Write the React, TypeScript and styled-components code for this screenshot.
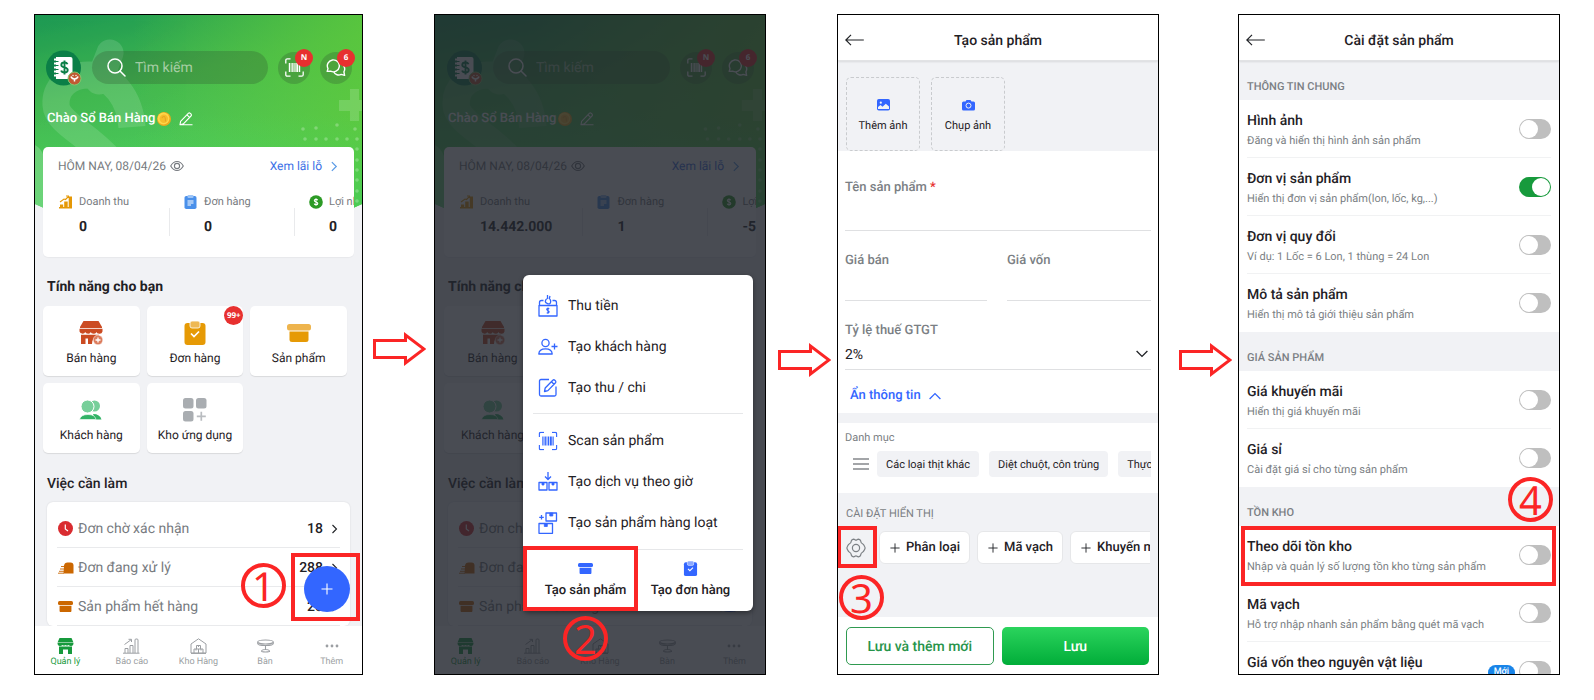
import React from "react";
import styled, { createGlobalStyle } from "styled-components";

const RED = "#fb2525";
const BLUE = "#3366ff";
const GREEN = "#179a3c";

const GlobalStyle = createGlobalStyle`
  * { box-sizing: border-box; }
  body {
    margin: 0;
    background: #fff;
    color: #1f2125;
    font-family: Roboto, "Noto Sans", sans-serif;
    text-rendering: geometricPrecision;
  }
  button { font: inherit; color: inherit; border: 0; padding: 0; background: none; cursor: pointer; text-rendering: inherit; }
  input, select { font: inherit; color: inherit; border: 0; padding: 0; background: none; outline: none; text-rendering: inherit; }
  a { color: inherit; text-decoration: none; }
  h1, h2, h3, p, ul { margin: 0; padding: 0; font-weight: inherit; }
  ul { list-style: none; }
  svg { display: block; flex: none; }
`;

/* ---------- guide layout ---------- */

const Guide = styled.main`
  display: grid;
  grid-template-columns:
    minmax(0, 329fr) 71px minmax(0, 332fr) 71px minmax(0, 322fr) 79px minmax(0, 322fr);
  height: 100vh;
  min-height: 600px;
  padding: 14px 34px 25px;
`;

const Phone = styled.section<{ $white?: boolean }>`
  position: relative;
  display: flex;
  flex-direction: column;
  min-height: 0;
  overflow: hidden;
  border: 1px solid #000;
  background: ${(p) => (p.$white ? "#fff" : "#f1f2f5")};
`;

const ArrowCell = styled.div<{ $top: number; $left: number }>`
  padding: ${(p) => p.$top}px 0 0 ${(p) => p.$left}px;
`;

const StepArrow = ({ top, left }: { top: number; left: number }) => (
  <ArrowCell $top={top} $left={left}>
    <svg width="53" height="34" viewBox="0 0 53 34" fill="none" stroke={RED} strokeWidth="3">
      <path d="M1.5 8.5H32.5V3L51 17L32.5 31V25.5H1.5Z" />
    </svg>
  </ArrowCell>
);

const Highlight = styled.span<{ $inset: string }>`
  position: absolute;
  inset: ${(p) => p.$inset};
  z-index: 3;
  border: 4px solid ${RED};
  pointer-events: none;
`;

const StepNumber = styled.span<{ $top: number; $left?: number; $right?: number }>`
  position: absolute;
  top: ${(p) => p.$top}px;
  ${(p) => (p.$left !== undefined ? `left: ${p.$left}px;` : "")}
  ${(p) => (p.$right !== undefined ? `right: ${p.$right}px;` : "")}
  z-index: 4;
  display: grid;
  place-items: center;
  width: 45px;
  height: 45px;
  border: 4px solid ${RED};
  border-radius: 50%;
  color: ${RED};
  font: 400 40px/36px "Noto Sans", sans-serif;
  pointer-events: none;
`;

/* ---------- icons ---------- */

const ScanIcon = ({ color = "#fff" }: { color?: string }) => (
  <svg width="19" height="19" viewBox="0 0 19 19" fill="none" stroke={color} strokeWidth="1.3">
    <path d="M.8 5.5V2.3Q.8.8 2.3.8H5.5M13.5.8H16.7Q18.2.8 18.2 2.3V5.5M18.2 13.5V16.7Q18.2 18.2 16.7 18.2H13.5M5.5 18.2H2.3Q.8 18.2.8 16.7V13.5" />
    <path d="M4.4 5V14M7.2 5V14M10 5V14M14.6 5V14" strokeWidth="1.2" />
    <path d="M12.3 5V14" strokeWidth="2" />
    <path d="M5.9 5V14M8.6 5V14" strokeWidth=".6" />
  </svg>
);

const SearchIcon = () => (
  <svg width="19" height="19" viewBox="0 0 19 19" fill="none" stroke="#fff" strokeWidth="1.5">
    <circle cx="8" cy="8" r="7" />
    <path d="M13 13L18 18" strokeLinecap="round" />
  </svg>
);

const ChatIcon = () => (
  <svg width="20" height="18" viewBox="0 0 20 18" fill="none" stroke="#fff" strokeWidth="1.4" strokeLinejoin="round">
    <path d="M1.2 12.4L2 9.6A6 6 0 1 1 4.6 12.2Z" />
    <path d="M14.4 4.6A5.6 5.6 0 0 1 17.9 12.9L18.6 16.4L15.2 15.4A5.6 5.6 0 0 1 7.8 13.2" />
  </svg>
);

const AvatarArt = () => (
  <svg width="36" height="36" viewBox="0 0 36 36">
    <circle cx="17.5" cy="18" r="17.5" fill="#0b7f47" />
    <path d="M10 7H24.5Q26.5 7 26.5 9V27Q26.5 29 24.5 29H10Z" fill="#fff" />
    <path d="M8 9.5H12M8 13.5H12M8 17.5H12M8 21.5H12M8 25.5H12" stroke="#fff" strokeWidth="2" />
    <path d="M10 11.5H12.5M10 15.5H12.5M10 19.5H12.5M10 23.5H12.5" stroke="#0b7f47" strokeWidth="1.2" />
    <path
      d="M21.5 14.2C21 12.8 19.6 12.5 18.4 12.5C16.8 12.5 15.3 13.3 15.3 14.9C15.3 18.3 21.7 16.6 21.7 20C21.7 21.7 20.2 22.5 18.5 22.5C17 22.5 15.6 21.9 15.2 20.5M18.5 10.5V24.5"
      fill="none"
      stroke="#0b7f47"
      strokeWidth="1.9"
    />
    <circle cx="28.5" cy="28.5" r="6.5" fill="#c05a33" stroke="#86c66f" />
    <path d="M25 26.5Q25.500 28.500 28.5 29Q31.500 28.500 32 26.500M28.5 28.500V31.5" stroke="#fff" strokeWidth="1.5" fill="none" />
    <circle cx="27" cy="25.5" r=".7" fill="#fff" />
    <circle cx="30" cy="25.5" r=".7" fill="#fff" />
  </svg>
);

const CoinIcon = () => (
  <svg width="14" height="14" viewBox="0 0 14 14">
    <circle cx="7" cy="7" r="7" fill="#eca91c" />
    <circle cx="6.5" cy="6.5" r="5.9" fill="#ffd54a" />
    <circle cx="6.8" cy="6.8" r="4.2" fill="#f7bd2c" />
    <path d="M5 6.2Q5.5 4.5 7 4.5T8.5 9.5" stroke="#e6a524" strokeWidth="1.1" fill="none" />
  </svg>
);

const PenIcon = () => (
  <svg width="14" height="14" viewBox="0 0 14 14" fill="none" stroke="#fff" strokeWidth="1.1" strokeLinejoin="round">
    <path d="M1 12.8L1.6 9.3L9.3 1.3Q10.3.4 11.3 1.3L12 2Q12.9 3 12 4L4.4 11.9L1 12.8H13.5" />
    <path d="M8 2.8L10.6 5.4" />
  </svg>
);

const EyeIcon = () => (
  <svg width="14" height="12" viewBox="0 0 14 12" fill="none" stroke="#777b80" strokeWidth="1.1">
    <path d="M.7 6Q3.2 1.5 7 1.5T13.3 6Q10.8 10.5 7 10.5T.7 6Z" />
    <circle cx="7" cy="6" r="2.6" />
  </svg>
);

const Chevron = ({ dir = "right", color = "currentColor", size = 10 }: { dir?: string; color?: string; size?: number }) => {
  const d: Record<string, string> = {
    right: "M3.5 1L7.5 5L3.5 9",
    down: "M0.5 2.5L5 7L9.5 2.5",
    up: "M0.5 7.5L5 3L9.5 7.5",
  };
  return (
    <svg width={size} height={size} viewBox="0 0 10 10" fill="none" stroke={color} strokeWidth="1.1">
      <path d={d[dir]} />
    </svg>
  );
};

const RevenueIcon = () => (
  <svg width="14" height="14" viewBox="0 0 14 14" fill="#e59806">
    <path d="M1 9.5H4.2V13H1ZM5.2 6.5H8.7V13H5.2ZM9.7 1.5H13V13H9.7ZM0 12H13V13.6H0Z" />
    <path d="M1 7L5 4L6.5 4.5L9 2M7 1H9.5V3" fill="none" stroke="#e59806" strokeWidth="1.1" />
  </svg>
);

const OrdersIcon = () => (
  <svg width="13" height="14" viewBox="0 0 13 14">
    <rect x=".5" y="1" width="12" height="13" rx="1.8" fill="#4a90ea" />
    <rect x="3.5" y="0" width="6" height="3" rx="1" fill="#9cc4f7" />
    <path d="M3.5 6H9.5M3.5 8H9.5M3.5 10H7" stroke="#fff" strokeWidth="1.1" />
  </svg>
);

const ProfitIcon = () => (
  <svg width="14" height="14" viewBox="0 0 14 14">
    <circle cx="7" cy="7" r="6.8" fill="#2c9a25" />
    <path
      d="M8.7 5.3C8.4 4.5 7.7 4.3 7 4.3C6 4.3 5.3 4.8 5.3 5.6C5.3 7.5 8.8 6.5 8.8 8.4C8.8 9.3 8 9.7 7 9.7C6.1 9.7 5.4 9.4 5.2 8.6M7 3.2V10.8"
      fill="none"
      stroke="#fff"
      strokeWidth="1.1"
    />
  </svg>
);

const SellIcon = () => (
  <svg width="24" height="24" viewBox="0 0 24 24">
    <path d="M4.5 0H19.5L23 6V7H1V6Z" fill="#cb4b22" />
    <path d="M.5 7.8H23.5V10.5Q22.8 13 20.4 12.8Q17.5 12.5 17.5 11Q17 13 14.6 12.8Q12 12.6 11.8 11Q11.4 12.9 9.2 12.8Q6.6 12.7 6.2 11Q5.5 12.9 3.6 12.8Q1 12.6.5 10.5Z" fill="#cb4b22" />
    <path d="M2 13.7H20V15.5Q13 16 13 23H9V17.5H6.5V23H2Z" fill="#cb4b22" />
    <circle cx="19" cy="19" r="4.8" fill="#dc7d5e" stroke="#fff" strokeWidth=".5" />
    <path d="M19 16.5V21.5M16.5 19H21.5" stroke="#fff" strokeWidth="1.3" />
  </svg>
);

const ClipIcon = ({ size, body, clip }: { size: number; body: string; clip: string }) => (
  <svg width={size} height={size} viewBox="0 0 24 24">
    <rect x="1.5" y="2" width="21" height="22" rx="3" fill={body} />
    <rect x="7" y="0" width="10" height="7" rx="2" fill={clip} stroke="#fff" strokeWidth=".8" />
    <path d="M8 12.5L11 15.5L16 10.5" fill="none" stroke="#fff" strokeWidth="1.7" />
  </svg>
);

const BoxIcon = ({ width, lid, body }: { width: number; lid: string; body: string }) => (
  <svg width={width} height={(width * 3) / 4} viewBox="0 0 24 18">
    <rect x="0" y="0" width="24" height="6.5" rx="2.5" fill={lid} />
    <path d="M2.5 7.5H21.5V15.5Q21.5 18 19 18H5Q2.5 18 2.5 15.5Z" fill={body} />
  </svg>
);

const CustomersIcon = () => (
  <svg width="24" height="24" viewBox="0 0 24 24">
    <circle cx="15.5" cy="8" r="5.5" fill="#77cf9a" />
    <path d="M14 16Q21 16 22.5 21.5H16Z" fill="#32b366" />
    <circle cx="8.5" cy="8.5" r="6.5" fill="#77cf9a" stroke="#fff" />
    <path d="M.5 21.5Q2 16.5 9 16.5T17 21.5Z" fill="#32b366" stroke="#fff" strokeWidth=".6" />
  </svg>
);

const AppsIcon = () => (
  <svg width="24" height="24" viewBox="0 0 24 24" fill="#a9adb1">
    <rect x="0" y="0" width="10.5" height="10.5" rx="2.5" />
    <rect x="13" y="0" width="10.5" height="10.5" rx="2.5" />
    <rect x="0" y="13" width="10.5" height="10.5" rx="2.5" />
    <path d="M18.3 13.8V22.8M13.8 18.3H22.8" stroke="#b9bcc0" strokeWidth="1.7" />
  </svg>
);

const ClockIcon = () => (
  <svg width="15" height="15" viewBox="0 0 15 15">
    <circle cx="7.5" cy="7.5" r="7.5" fill="#d92c30" />
    <path d="M7.3 3.5V8L10 10" fill="none" stroke="#fff" strokeWidth="1.2" />
  </svg>
);

const DispatchIcon = () => (
  <svg width="16" height="12" viewBox="0 0 16 12">
    <path d="M6 3.5Q6.5.5 9.5.5H12.5Q15.5.5 15.5 3.5V11.500H5.500Z" fill="#cb6700" />
    <path d="M3 4.5H7M2 7H6M1 9.3H6M0 11.2H6" stroke="#cb6700" strokeWidth=".9" />
  </svg>
);

const StoreNavIcon = () => (
  <svg width="17" height="16" viewBox="0 0 17 16" fill={GREEN}>
    <path d="M2.5 0H14.5L16.5 4.5H.5Z" />
    <path d="M.5 5H16.5Q16.5 8 14 8Q12.5 8 11.5 7Q10 8.2 8.5 7Q7 8.2 5.5 7Q4.5 8 3 8Q.5 8 .5 5Z" />
    <path d="M2 8.6H15V16H11V11.5H6V16H2Z" />
  </svg>
);

const ReportNavIcon = () => (
  <svg width="17" height="16" viewBox="0 0 17 16" fill="none" stroke="#9c9fa3" strokeWidth="1">
    <path d="M2 15V10.5H5V15M7 15V7.5H10V15M12 15V2Q12 1 13 1H14Q15 1 15 2V15M0 15.2H16.5M1.5 6.5L8 1.8M5.5 1.3H8.5V4" />
  </svg>
);

const WarehouseNavIcon = () => (
  <svg width="17" height="16" viewBox="0 0 17 16" fill="none" stroke="#9c9fa3" strokeWidth="1">
    <path d="M1 15V6L8.5.8L16 6V15ZM1 15.4H16M4 15V11H13V15M8.5 11V15M6.5 11V7.5H10.5V11M6 11V12.5M11 11V12.5M8.5 7.5V9" />
  </svg>
);

const TableNavIcon = () => (
  <svg width="17" height="14" viewBox="0 0 17 14" fill="none" stroke="#9c9fa3" strokeWidth="1.1">
    <path d="M.7 3Q.7 1 8.5 1T16.3 3V4.5Q16.3 6.5 8.5 6.5T.7 4.5ZM.7 3.5Q3 5 8.5 5T16.3 3.5M8.5 6.5V10.5M4.5 12.5Q4.5 10.5 8.5 10.5T12.5 12.5Q8.5 13.5 4.5 12.5" />
  </svg>
);

const MoreNavIcon = () => (
  <svg width="14" height="16" viewBox="0 0 14 16" fill="#9c9fa3">
    <circle cx="2" cy="8" r="1.4" />
    <circle cx="7" cy="8" r="1.4" />
    <circle cx="12" cy="8" r="1.4" />
  </svg>
);

const BlueLine = ({ children }: { children: React.ReactNode }) => (
  <svg width="20" height="22" viewBox="0 0 20 22" fill="none" stroke={BLUE} strokeWidth="1.3" strokeLinejoin="round">
    {children}
  </svg>
);

const CollectIcon = () => (
  <BlueLine>
    <path d="M1 10.5H19V21H1ZM1.5 10.5V7.5Q1.5 5.5 3.5 5.5H5.5M14.5 5.5H16.5Q18.5 5.5 18.5 7.5V10.5" />
    <path d="M10 3Q7.3 4.5 7.3 6.3T10 8.8T12.7 6.3Q12.7 5 11.6 4M9.5 0L9.5 3.5M12 1L11.2 4" />
    <path d="M11.3 13.7Q10 13 9 13.7T10 15.7Q11.5 16.2 11 17.3T8.7 17.7M10 12.5V18.7" strokeWidth="1.1" />
  </BlueLine>
);

const AddPersonIcon = () => (
  <BlueLine>
    <circle cx="7.5" cy="7" r="3.6" />
    <path d="M.8 18Q1 12.8 7.5 12.8T14.2 18ZM13.5 10.5H19.5M16.5 7.5V13.5" />
  </BlueLine>
);

const ComposeIcon = () => (
  <BlueLine>
    <path d="M11 2.5H3Q1.5 2.5 1.5 4V17.5Q1.5 19 3 19H16.5Q18 19 18 17.5V9.5" />
    <path d="M6.5 14.5L7.2 11L14.8 3.2Q15.8 2.3 16.8 3.2L17.5 3.9Q18.3 4.9 17.5 5.8L9.9 13.6ZM13.5 4.8L16 7.3" />
  </BlueLine>
);

const HourlyIcon = () => (
  <BlueLine>
    <path d="M10 1V8M7 5.5L10 8.5L13 5.5M1 11.5H9V19H1ZM11 11.5H19V19H11Z" />
    <path d="M4 11.5H6V14H4ZM14 11.5H16V14H14Z" fill={BLUE} strokeWidth=".8" />
  </BlueLine>
);

const BulkIcon = () => (
  <BlueLine>
    <path d="M8 1H18.5V9H8ZM1 11.5H14.5V21.3H1ZM3.5 3V7.5M1.2 5.3H5.8" />
    <path d="M11.8 1H14.8V4H11.8ZM6.3 11.5H9.3V14.5H6.3Z" fill={BLUE} strokeWidth=".8" />
  </BlueLine>
);

const BackIcon = () => (
  <svg width="19" height="12" viewBox="0 0 19 12" fill="none" stroke="#1f2125" strokeWidth="1.2">
    <path d="M.8 6H18.8M6 .8L.8 6L6 11.2" />
  </svg>
);

const ImageIcon = () => (
  <svg width="13" height="12" viewBox="0 0 13 12">
    <rect width="13" height="11.5" rx="1.8" fill={BLUE} />
    <circle cx="3.8" cy="3.7" r="1.1" fill="#f1f2f5" />
    <path d="M1 10V8L3.5 6L5.5 7.7L8.8 4.8L12 7.5V10Z" fill="#f1f2f5" />
  </svg>
);

const CameraIcon = () => (
  <svg width="13" height="12" viewBox="0 0 13 12">
    <path d="M1.5 2.5H3.5L4.5 1H8.5L9.5 2.5H11.5Q13 2.5 13 4V10Q13 11.5 11.5 11.5H1.5Q0 11.5 0 10V4Q0 2.5 1.5 2.5Z" fill={BLUE} />
    <circle cx="6.5" cy="6.6" r="2.5" fill="none" stroke="#f1f2f5" />
  </svg>
);

const MenuIcon = () => (
  <svg width="16" height="12" viewBox="0 0 16 12" stroke="#85888c" strokeWidth="1.4">
    <path d="M0 1H16M0 6H16M0 11H16" />
  </svg>
);

const GearIcon = () => (
  <svg width="20" height="20" viewBox="0 0 20 20" fill="none" stroke="#7c8085" strokeWidth="1.2" strokeLinejoin="round">
    <circle cx="10" cy="10" r="3.6" />
    <path d="M7.5 1.2Q8.4 1.2 9 1.7Q10 2.5 11 1.7Q11.6 1.2 12.5 1.2Q14.3 1.5 14.7 3Q14.9 5.2 16.5 5.8Q17.6 6.3 18.6 8.5Q19.5 10 18.6 11.5Q17.6 13.7 16.5 14.2Q14.9 14.8 14.7 17Q14.3 18.5 12.5 18.8Q11.6 18.8 11 18.3Q10 17.5 9 18.3Q8.4 18.8 7.5 18.8Q5.7 18.5 5.3 17Q5.1 14.8 3.5 14.2Q2.4 13.7 1.4 11.5Q.5 10 1.4 8.5Q2.4 6.3 3.5 5.8Q5.1 5.2 5.3 3Q5.7 1.5 7.5 1.2Z" />
  </svg>
);

const PlusIcon = ({ size, color }: { size: number; color: string }) => (
  <svg width={size} height={size} viewBox="0 0 12 12" stroke={color} strokeWidth="1.1">
    <path d="M6 .5V11.5M.5 6H11.5" />
  </svg>
);

/* ---------- home screen ---------- */

const HeaderArt = styled.svg`
  position: absolute;
  top: 0;
  left: 0;
  width: 100%;
  height: 196px;
`;

const HomeBody = styled.div<{ $inset: number }>`
  position: relative;
  flex: 1;
  min-height: 0;
  overflow: hidden;
  padding: 34px ${(p) => p.$inset}px 0;
`;

const TopRow = styled.div`
  display: flex;
  align-items: center;
  gap: 10px;
  height: 37px;
  padding: 0 10px 0 11px;
`;

const SearchBox = styled.label`
  flex: 1;
  min-width: 0;
  display: flex;
  align-items: center;
  gap: 9px;
  height: 33px;
  padding: 0 15px;
  border-radius: 17px;
  background: rgba(50, 90, 50, 0.3);
  input {
    flex: 1;
    min-width: 0;
    padding-top: 1px;
    font-size: 14px;
    line-height: 20px;
  }
  input::placeholder { color: rgba(225, 235, 220, 0.65); opacity: 1; }
`;

const RoundButton = styled.button`
  position: relative;
  display: grid;
  place-items: center;
  flex: none;
  width: 32px;
  height: 32px;
  border-radius: 50%;
  background: rgba(50, 90, 50, 0.3);
`;

const Badge = styled.span<{ $size: number; $offset: number }>`
  position: absolute;
  top: ${(p) => p.$offset}px;
  right: ${(p) => p.$offset}px;
  width: ${(p) => p.$size}px;
  height: ${(p) => p.$size}px;
  border-radius: 50%;
  background: #e7302f;
  color: #fff;
  text-align: center;
  font: 700 8px/${(p) => p.$size}px "Open Sans", sans-serif;
`;

const Greeting = styled.p`
  display: flex;
  align-items: center;
  gap: 2px;
  height: 16px;
  margin-top: 25px;
  padding-left: 12px;
  color: #fff;
  font-size: 13px;
  font-weight: 500;
  line-height: 16px;
  button { margin-left: 6px; }
`;

const SummaryCard = styled.section`
  margin: 20px 8px 0;
  padding: 11px 0 21px 15px;
  border-radius: 5px;
  background: #fff;
  overflow: hidden;
  box-shadow: 0 1px 1px rgba(0, 0, 0, 0.04);
`;

const SummaryTop = styled.div`
  display: flex;
  align-items: center;
  gap: 4px;
  height: 16px;
  padding-right: 15px;
  color: #777b80;
  font-size: 12px;
  line-height: 16px;
  a {
    display: flex;
    align-items: center;
    gap: 6px;
    margin-left: auto;
    color: #3b6fe6;
  }
`;

const Metrics = styled.div`
  display: flex;
  margin-top: 20px;
  padding-left: 1px;
`;

const Metric = styled.div`
  flex: none;
  display: grid;
  grid-template-columns: 14px auto;
  column-gap: 6px;
  row-gap: 8px;
  align-items: center;
  min-width: 110px;
  padding-right: 30px;
  span { font-size: 11px; line-height: 16px; color: #777b80; white-space: nowrap; }
  strong { grid-column: 2; font-size: 14px; line-height: 18px; font-weight: 700; }
`;

const MetricRule = styled.i`
  flex: none;
  align-self: flex-end;
  width: 1px;
  height: 28px;
  margin-right: 14px;
  background: #e9eaec;
`;

const Heading = styled.h2<{ $gap: number; $weight: number }>`
  margin: ${(p) => p.$gap}px 0 0 12px;
  font-size: 14px;
  line-height: 20px;
  font-weight: ${(p) => p.$weight};
`;

const Tiles = styled.div`
  display: grid;
  grid-template-columns: repeat(3, 1fr);
  gap: 7px;
  margin: 9px 15px 0 8px;
`;

const Tile = styled.button`
  position: relative;
  display: flex;
  flex-direction: column;
  align-items: center;
  gap: 5px;
  height: 70px;
  padding-top: 15px;
  border-radius: 5px;
  background: #fff;
  box-shadow: 0 1px 1px rgba(0, 0, 0, 0.1);
  font-size: 12px;
  line-height: 16px;
`;

const TileArt = styled.span`
  display: grid;
  place-items: center;
  height: 24px;
`;

const TaskCard = styled.ul`
  margin: 8px 12px 0;
  padding: 7px 10px 0;
  border-radius: 6px;
  background: #fff;
  box-shadow: 0 0 2px rgba(0, 0, 0, 0.12);
`;

const Task = styled.li`
  border-bottom: 1px solid #e9eaec;
  a {
    display: flex;
    align-items: center;
    height: 38px;
    padding: 1px 1px 0;
    font-size: 14px;
    line-height: 20px;
  }
  strong { margin: 0 6px 0 auto; font-weight: 500; }
`;

const TaskArt = styled.span`
  display: grid;
  place-items: center;
  width: 15px;
  margin-right: 5px;
`;

const TaskName = styled.span`
  color: #777b80;
`;

const BottomNav = styled.nav`
  position: relative;
  display: flex;
  height: 48px;
  margin: 0 -3px;
  background: #fff;
`;

const NavItem = styled.a<{ $on?: boolean }>`
  flex: 1;
  display: flex;
  flex-direction: column;
  align-items: center;
  padding-top: 11px;
  font-size: 9px;
  line-height: 12px;
  color: ${(p) => (p.$on ? GREEN : "#9c9fa3")};
`;

const NavArt = styled.span`
  display: grid;
  place-items: center;
  height: 18px;
  margin-bottom: 1px;
`;

const FabSpot = styled.div`
  position: absolute;
  right: 12px;
  bottom: 62px;
`;

const Fab = styled.button`
  display: grid;
  place-items: center;
  width: 46px;
  height: 46px;
  border-radius: 50%;
  background: ${BLUE};
`;

const dots = [
  [268, 114], [281, 113], [302, 110], [320, 114],
  [270, 124], [281, 124], [291, 124], [302, 124], [312, 124], [322, 124],
  [322, 134], [322, 145], [322, 155], [322, 165], [322, 176], [322, 186],
];

const HomeScreen = ({
  id,
  inset,
  revenue,
  orders,
  profit,
  children,
}: {
  id: string;
  inset: number;
  revenue: string;
  orders: string;
  profit: string;
  children?: React.ReactNode;
}) => (
  <>
    <HeaderArt viewBox="0 0 327 196" preserveAspectRatio="none">
      <defs>
        <linearGradient id={id} x1="0" y1="0" x2=".35" y2="1">
          <stop offset="0" stopColor="#1c9853" />
          <stop offset=".4" stopColor="#41b750" />
          <stop offset="1" stopColor="#52cf62" />
        </linearGradient>
        <linearGradient id={`${id}s`} x1="0" y1="0" x2="1" y2="0">
          <stop offset=".3" stopColor="#62cb38" stopOpacity="0" />
          <stop offset="1" stopColor="#5fc93a" stopOpacity=".8" />
        </linearGradient>
        <linearGradient id={`${id}b`} x1="0" y1="0" x2="0" y2="1">
          <stop offset=".5" stopColor="#4dd156" stopOpacity="0" />
          <stop offset="1" stopColor="#46cb58" stopOpacity=".9" />
        </linearGradient>
        <clipPath id={`${id}c`}>
          <path d="M0 0H327V189L318 193Q164 215 9 193L0 189Z" />
        </clipPath>
      </defs>
      <g clipPath={`url(#${id}c)`}>
        <rect width="327" height="200" fill={`url(#${id})`} />
        <rect width="327" height="200" fill={`url(#${id}s)`} />
        <rect width="327" height="200" fill={`url(#${id}b)`} />
        <g fill="none" stroke="#fff" strokeWidth="27" opacity=".13">
          <path d="M97 112C95 84 78 60 54 60C32 60 20 74 21 90C22 108 52 118 76 146" />
          <path d="M75 38L64 66" strokeLinecap="round" />
        </g>
        <path d="M0 130Q8 134 12 150V196H0Z" fill="#fff" fillOpacity=".2" />
        <path d="M315 74H324V85H334V96H324V106H315V96H304V85H315Z" fill="#fff" fillOpacity=".16" />
        {dots.map(([x, y]) => (
          <circle key={`${x}-${y}`} cx={x} cy={y} r="1.8" fill="#fff" fillOpacity=".25" />
        ))}
      </g>
    </HeaderArt>
    <HomeBody $inset={inset}>
      <TopRow>
        <AvatarArt />
        <SearchBox>
          <SearchIcon />
          <input type="search" placeholder="Tìm kiếm" aria-label="Tìm kiếm" />
        </SearchBox>
        <RoundButton aria-label="Scan">
          <ScanIcon />
          <Badge $size={18} $offset={-3}>N</Badge>
        </RoundButton>
        <RoundButton aria-label="Chat">
          <ChatIcon />
          <Badge $size={18} $offset={-3}>6</Badge>
        </RoundButton>
      </TopRow>
      <Greeting>
        Chào Sổ Bán Hàng <CoinIcon />
        <button aria-label="Sửa"><PenIcon /></button>
      </Greeting>
      <SummaryCard>
        <SummaryTop>
          HÔM NAY, 08/04/26 <EyeIcon />
          <a href="#report">Xem lãi lỗ <Chevron color="#5b9be6" size={11} /></a>
        </SummaryTop>
        <Metrics>
          <Metric><RevenueIcon /><span>Doanh thu</span><strong>{revenue}</strong></Metric>
          <MetricRule />
          <Metric><OrdersIcon /><span>Đơn hàng</span><strong>{orders}</strong></Metric>
          <MetricRule />
          <Metric><ProfitIcon /><span>Lợi nhuận</span><strong>{profit}</strong></Metric>
        </Metrics>
      </SummaryCard>
      <Heading $gap={20} $weight={700}>Tính năng cho bạn</Heading>
      <Tiles>
        <Tile><TileArt><SellIcon /></TileArt>Bán hàng</Tile>
        <Tile>
          <TileArt><ClipIcon size={24} body="#e69a05" clip="#eeb854" /></TileArt>Đơn hàng
          <Badge $size={19} $offset={0}>99+</Badge>
        </Tile>
        <Tile><TileArt><BoxIcon width={24} lid="#eeb44d" body="#e69a05" /></TileArt>Sản phẩm</Tile>
        <Tile><TileArt><CustomersIcon /></TileArt>Khách hàng</Tile>
        <Tile><TileArt><AppsIcon /></TileArt>Kho ứng dụng</Tile>
      </Tiles>
      <Heading $gap={21} $weight={500}>Việc cần làm</Heading>
      <TaskCard>
        <Task><a href="#pending"><TaskArt><ClockIcon /></TaskArt><TaskName>Đơn chờ xác nhận</TaskName><strong>18</strong><Chevron /></a></Task>
        <Task><a href="#active"><TaskArt><DispatchIcon /></TaskArt><TaskName>Đơn đang xử lý</TaskName><strong>288</strong><Chevron /></a></Task>
        <Task><a href="#stock"><TaskArt><BoxIcon width={15} lid="#cb6700" body="#cb6700" /></TaskArt><TaskName>Sản phẩm hết hàng</TaskName><strong>28</strong><Chevron /></a></Task>
      </TaskCard>
    </HomeBody>
    <BottomNav>
      <NavItem href="#home" $on><NavArt><StoreNavIcon /></NavArt>Quản lý</NavItem>
      <NavItem href="#reports"><NavArt><ReportNavIcon /></NavArt>Báo cáo</NavItem>
      <NavItem href="#warehouse"><NavArt><WarehouseNavIcon /></NavArt>Kho Hàng</NavItem>
      <NavItem href="#tables"><NavArt><TableNavIcon /></NavArt>Bàn</NavItem>
      <NavItem href="#more"><NavArt><MoreNavIcon /></NavArt>Thêm</NavItem>
    </BottomNav>
    <FabSpot>
      <Fab aria-label="Tạo mới"><PlusIcon size={12} color="#fff" /></Fab>
      {children}
    </FabSpot>
  </>
);

/* ---------- quick menu ---------- */

const Scrim = styled.div`
  position: absolute;
  inset: 0;
  background: rgba(33, 37, 45, 0.82);
`;

const QuickMenu = styled.div`
  position: absolute;
  right: 12px;
  bottom: 63px;
  width: 230px;
  padding: 10px 10px 0;
  border-radius: 6px;
  background: #fff;
  box-shadow: 0 2px 5px rgba(0, 0, 0, 0.4);
`;

const QuickItem = styled.button`
  display: flex;
  align-items: center;
  gap: 10px;
  width: 100%;
  height: 41px;
  padding-left: 5px;
  font-size: 14px;
  line-height: 20px;
`;

const QuickRule = styled.hr`
  height: 1px;
  margin: 5px 0 6px;
  border: 0;
  background: #e6e7e9;
`;

const QuickFooter = styled.div`
  display: grid;
  grid-template-columns: 1fr 1fr;
  margin-top: 6px;
  border-top: 1px solid #e6e7e9;
`;

const QuickAction = styled.button`
  position: relative;
  display: flex;
  flex-direction: column;
  align-items: center;
  gap: 7px;
  height: 61px;
  padding-top: 11px;
  font-size: 13px;
  line-height: 16px;
  font-weight: 500;
`;

const ActionArt = styled.span`
  display: grid;
  place-items: center;
  height: 15px;
`;

/* ---------- shared title bar ---------- */

const TitleBar = styled.header`
  position: relative;
  z-index: 1;
  display: grid;
  grid-template-columns: 30px 1fr 30px;
  align-items: center;
  flex: none;
  height: 46px;
  padding: 4px 7px 0;
  border-bottom: 1px solid #e2e3e5;
  background: #fff;
  box-shadow: 0 1px 2px rgba(0, 0, 0, 0.1);
  h1 { padding-top: 2px; font-size: 14px; line-height: 20px; font-weight: 500; text-align: center; }
`;

/* ---------- product form ---------- */

const PhotoRow = styled.div`
  display: flex;
  gap: 11px;
  padding: 16px 8px 0;
  background: #f1f2f5;
`;

const PhotoButton = styled.button`
  display: flex;
  flex-direction: column;
  align-items: center;
  justify-content: center;
  gap: 8px;
  width: 74px;
  height: 74px;
  padding-top: 3px;
  border: 1px dashed #c9cbce;
  border-radius: 5px;
  font-size: 11px;
  line-height: 14px;
`;

const Fields = styled.div`
  display: grid;
  grid-template-columns: 142px 1fr;
  column-gap: 20px;
  padding: 0 7px;
`;

const Field = styled.label<{ $wide?: boolean; $top: number; $box: number }>`
  position: relative;
  grid-column: ${(p) => (p.$wide ? "1 / -1" : "auto")};
  display: block;
  padding-top: ${(p) => p.$top}px;
  border-bottom: 1px solid #dfe0e2;
  color: #7b7f84;
  font-size: 13px;
  line-height: 16px;
  font-weight: 500;
  em { color: #e7302f; font-style: normal; }
  input, select {
    display: block;
    width: 100%;
    height: ${(p) => p.$box}px;
    padding-top: 1px;
    appearance: none;
    color: #1f2125;
    font-size: 14px;
    font-weight: 400;
  }
`;

const SelectArrow = styled.span`
  position: absolute;
  right: 3px;
  bottom: 9px;
  pointer-events: none;
`;

const ToggleInfo = styled.button`
  display: flex;
  align-items: center;
  align-self: flex-start;
  gap: 8px;
  height: 43px;
  margin-left: 12px;
  padding-top: 9px;
  color: ${BLUE};
  font-size: 13px;
  line-height: 16px;
  font-weight: 500;
`;

const CategoryBox = styled.div`
  padding: 7px 7px 0 7px;
  height: 80px;
  border-top: 10px solid #f1f2f5;
  p { font-size: 11px; line-height: 16px; color: #7b7f84; }
`;

const CategoryRow = styled.div`
  display: flex;
  align-items: center;
  gap: 8px;
  margin-top: 5px;
  padding-left: 8px;
  overflow: hidden;
`;

const Chip = styled.button`
  flex: none;
  height: 26px;
  margin-right: 2px;
  padding: 1px 9px 0;
  border-radius: 4px;
  background: #f1f2f5;
  font-size: 11px;
  line-height: 16px;
`;

const DisplayBox = styled.div`
  flex: 1;
  min-height: 0;
  padding: 13px 8px 0;
  background: #f1f2f5;
  p { font-size: 11px; line-height: 16px; color: #7b7f84; }
`;

const DisplayRow = styled.div`
  display: flex;
  align-items: center;
  margin-top: 9px;
`;

const GearButton = styled.button`
  position: relative;
  display: grid;
  place-items: center;
  flex: none;
  width: 20px;
  height: 33px;
  margin-right: 13px;
`;

const OptionRow = styled.div`
  flex: 1;
  min-width: 0;
  display: flex;
  gap: 7px;
  overflow: hidden;
`;

const Option = styled.button`
  flex: none;
  display: flex;
  align-items: center;
  gap: 6px;
  height: 33px;
  padding: 1px 9px 0 10px;
  border: 1px solid #e6e7e9;
  border-radius: 6px;
  background: #fff;
  font-size: 13px;
  line-height: 16px;
  font-weight: 500;
`;

const SaveBar = styled.footer`
  display: grid;
  grid-template-columns: 1fr 1fr;
  gap: 8px;
  padding: 10px 9px 9px 8px;
  background: #fff;
`;

const SaveButton = styled.button<{ $solid?: boolean }>`
  height: 38px;
  padding-top: 1px;
  border: ${(p) => (p.$solid ? "0" : "1px solid #2f9a50")};
  border-radius: 5px;
  background: ${(p) => (p.$solid ? "linear-gradient(#2bd45d, #01ad39)" : "#fff")};
  color: ${(p) => (p.$solid ? "#fff" : "#27944a")};
  font-size: 14px;
  line-height: 20px;
  font-weight: 500;
`;

/* ---------- settings list ---------- */

const GroupTitle = styled.h2`
  position: relative;
  flex: none;
  height: 39px;
  padding: 18px 8px 0;
  background: #f1f2f5;
  color: #7b7f84;
  font-size: 11px;
  line-height: 16px;
  font-weight: 500;
`;

const SettingRow = styled.label`
  position: relative;
  flex: none;
  display: flex;
  align-items: center;
  height: 58px;
  margin: 0 8px;
  border-bottom: 1px solid #f1f2f3;
  &:has(+ h2) { border-bottom-color: transparent; }
`;

const SettingText = styled.span`
  flex: 1;
  display: flex;
  flex-direction: column;
  gap: 4px;
  padding-top: 2px;
  b { font-size: 14px; line-height: 18px; font-weight: 500; }
  small { font-size: 11px; line-height: 14px; color: #7b7f84; }
`;

const NewTag = styled.span`
  margin: 4px 4px 0 0;
  padding: 0 6px;
  border-radius: 8px;
  background: #1884e8;
  color: #fff;
  font-size: 9px;
  line-height: 15px;
  font-weight: 500;
`;

const Switch = styled.input`
  appearance: none;
  flex: none;
  width: 32px;
  height: 20px;
  margin: 0;
  padding: 1px;
  border-radius: 10px;
  background: #bfbfbf;
  &::before {
    content: "";
    display: block;
    width: 18px;
    height: 18px;
    border-radius: 50%;
    background: #fff;
  }
  &:checked { background: ${GREEN}; }
  &:checked::before { margin-left: auto; }
`;

const Setting = ({
  name,
  note,
  on,
  tag,
  children,
}: {
  name: string;
  note: string;
  on?: boolean;
  tag?: string;
  children?: React.ReactNode;
}) => (
  <SettingRow>
    <SettingText><b>{name}</b><small>{note}</small></SettingText>
    {tag && <NewTag>{tag}</NewTag>}
    <Switch type="checkbox" defaultChecked={on} />
    {children}
  </SettingRow>
);

export default function App() {
  return (
    <>
      <GlobalStyle />
      <Guide>
        <Phone>
          <HomeScreen id="home" inset={0} revenue="0" orders="0" profit="0">
            <Highlight $inset="-13px -10px -9px -13px" />
            <StepNumber $top={-3} $left={-63}>1</StepNumber>
          </HomeScreen>
        </Phone>

        <StepArrow top={318} left={10} />

        <Phone>
          <HomeScreen id="menu" inset={1} revenue="14.442.000" orders="1" profit="-5.120.000" />
          <Scrim />
          <QuickMenu>
            <QuickItem><CollectIcon />Thu tiền</QuickItem>
            <QuickItem><AddPersonIcon />Tạo khách hàng</QuickItem>
            <QuickItem><ComposeIcon />Tạo thu / chi</QuickItem>
            <QuickRule />
            <QuickItem><BlueLine><g transform="translate(.5 1.5)"><ScanIcon color={BLUE} /></g></BlueLine>Scan sản phẩm</QuickItem>
            <QuickItem><HourlyIcon />Tạo dịch vụ theo giờ</QuickItem>
            <QuickItem><BulkIcon />Tạo sản phẩm hàng loạt</QuickItem>
            <QuickFooter>
              <QuickAction>
                <ActionArt><BoxIcon width={15} lid={BLUE} body={BLUE} /></ActionArt>
                Tạo sản phẩm
                <Highlight $inset="-4px 0 0 -10px" />
                <StepNumber $top={66} $left={30}>2</StepNumber>
              </QuickAction>
              <QuickAction>
                <ActionArt><ClipIcon size={15} body={BLUE} clip="#8aa8ff" /></ActionArt>
                Tạo đơn hàng
              </QuickAction>
            </QuickFooter>
          </QuickMenu>
        </Phone>

        <StepArrow top={329} left={12} />

        <Phone $white>
          <TitleBar>
            <button aria-label="Quay lại"><BackIcon /></button>
            <h1>Tạo sản phẩm</h1>
          </TitleBar>
          <PhotoRow>
            <PhotoButton><ImageIcon />Thêm ảnh</PhotoButton>
            <PhotoButton><CameraIcon />Chụp ảnh</PhotoButton>
          </PhotoRow>
          <Fields>
            <Field $wide $top={29} $box={34}>
              Tên sản phẩm <em>*</em>
              <input type="text" />
            </Field>
            <Field $top={22} $box={31}>
              Giá bán
              <input type="text" />
            </Field>
            <Field $top={22} $box={31}>
              Giá vốn
              <input type="text" />
            </Field>
            <Field $wide $top={22} $box={30}>
              Tỷ lệ thuế GTGT
              <select defaultValue="2%">
                <option>2%</option>
              </select>
              <SelectArrow><Chevron dir="down" color="#1f2125" size={12} /></SelectArrow>
            </Field>
          </Fields>
          <ToggleInfo>Ẩn thông tin <Chevron dir="up" size={12} /></ToggleInfo>
          <CategoryBox>
            <p>Danh mục</p>
            <CategoryRow>
              <MenuIcon />
              <Chip>Các loại thịt khác</Chip>
              <Chip>Diệt chuột, côn trùng</Chip>
              <Chip>Thực phẩm</Chip>
            </CategoryRow>
          </CategoryBox>
          <DisplayBox>
            <p>CÀI ĐẶT HIỂN THỊ</p>
            <DisplayRow>
              <GearButton aria-label="Cài đặt">
                <GearIcon />
                <Highlight $inset="-5px -11px -4px -9px" />
                <StepNumber $top={44} $left={-7}>3</StepNumber>
              </GearButton>
              <OptionRow>
                <Option><PlusIcon size={10} color="#1f2125" />Phân loại</Option>
                <Option><PlusIcon size={10} color="#1f2125" />Mã vạch</Option>
                <Option><PlusIcon size={10} color="#1f2125" />Khuyến mãi</Option>
              </OptionRow>
            </DisplayRow>
          </DisplayBox>
          <SaveBar>
            <SaveButton>Lưu và thêm mới</SaveButton>
            <SaveButton $solid>Lưu</SaveButton>
          </SaveBar>
        </Phone>

        <StepArrow top={329} left={20} />

        <Phone $white>
          <TitleBar>
            <button aria-label="Quay lại"><BackIcon /></button>
            <h1>Cài đặt sản phẩm</h1>
          </TitleBar>
          <GroupTitle>THÔNG TIN CHUNG</GroupTitle>
          <Setting name="Hình ảnh" note="Đăng và hiển thị hình ảnh sản phẩm" />
          <Setting name="Đơn vị sản phẩm" note="Hiển thị đơn vị sản phẩm(lon, lốc, kg,...)" on />
          <Setting name="Đơn vị quy đổi" note="Ví dụ: 1 Lốc = 6 Lon, 1 thùng = 24 Lon" />
          <Setting name="Mô tả sản phẩm" note="Hiển thị mô tả giới thiệu sản phẩm" />
          <GroupTitle>GIÁ SẢN PHẨM</GroupTitle>
          <Setting name="Giá khuyến mãi" note="Hiển thị giá khuyến mãi" />
          <Setting name="Giá sỉ" note="Cài đặt giá sỉ cho từng sản phẩm" />
          <GroupTitle>
            TỒN KHO
            <StepNumber $top={-10} $right={6}>4</StepNumber>
          </GroupTitle>
          <Setting name="Theo dõi tồn kho" note="Nhập và quản lý số lượng tồn kho từng sản phẩm">
            <Highlight $inset="0 -5px -3px -6px" />
          </Setting>
          <Setting name="Mã vạch" note="Hỗ trợ nhập nhanh sản phẩm bằng quét mã vạch" />
          <Setting name="Giá vốn theo nguyên vật liệu" note="Tính giá vốn theo nguyên vật liệu" tag="Mới" />
        </Phone>
      </Guide>
    </>
  );
}
